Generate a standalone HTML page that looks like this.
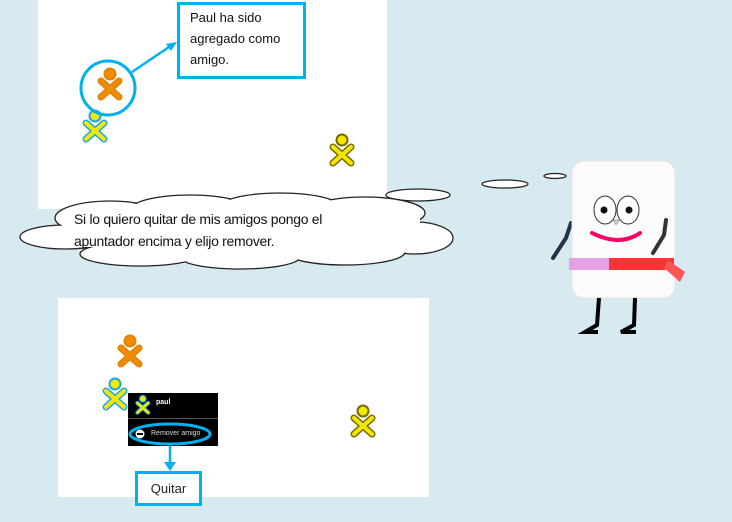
<!DOCTYPE html><html><head><style>
body{margin:0;width:732px;height:522px;background:#d6eaf0;position:relative;overflow:hidden;font-family:"Liberation Sans",sans-serif}
.p{position:absolute;background:#fff}
.t{position:absolute;font-size:13px;color:#111;line-height:21px}
</style></head><body>
<div class="p" style="left:38px;top:0;width:349px;height:209px"></div>
<div class="p" style="left:58px;top:298px;width:371px;height:199px"></div>
<svg width="732" height="522" style="position:absolute;left:0;top:0">
<defs>
<g id="xo"><path d="M3 13L21 29M21 13L3 29" stroke-linecap="round" stroke-width="7" stroke="var(--o)" fill="none"/><circle cx="12" cy="6" r="5.5" fill="var(--i)" stroke="var(--o)" stroke-width="2"/><path d="M3 13L21 29M21 13L3 29" stroke-linecap="round" stroke-width="4" stroke="var(--i)" fill="none"/></g>
</defs>
<use href="#xo" x="98" y="68" style="--o:#e0820a;--i:#f08c00"/>
<use href="#xo" x="83" y="110" style="--o:#1aa8e8;--i:#f5e800"/>
<circle cx="108" cy="88" r="27" fill="none" stroke="#00b0f0" stroke-width="3"/>
<line x1="132" y1="72" x2="172" y2="45" stroke="#00b0f0" stroke-width="2.5"/>
<path d="M177 42L166 44L171 51Z" fill="#00b0f0"/>
<use href="#xo" x="330" y="134" style="--o:#7a6a00;--i:#f2e600"/>
<g stroke="#222" stroke-width="1.3" fill="#fff">
<ellipse cx="418" cy="195" rx="32" ry="6"/><ellipse cx="505" cy="184" rx="23" ry="4"/><ellipse cx="555" cy="176" rx="11" ry="2.5"/>
<ellipse cx="110" cy="218" rx="55" ry="17"/><ellipse cx="190" cy="210" rx="60" ry="15"/><ellipse cx="280" cy="207" rx="60" ry="14"/><ellipse cx="365" cy="213" rx="60" ry="16"/><ellipse cx="415" cy="238" rx="38" ry="16"/><ellipse cx="345" cy="252" rx="60" ry="13"/><ellipse cx="240" cy="257" rx="60" ry="12"/><ellipse cx="140" cy="254" rx="60" ry="12"/><ellipse cx="65" cy="237" rx="45" ry="12"/>
</g>
<g fill="#fff"><ellipse cx="110" cy="218" rx="54" ry="16"/><ellipse cx="190" cy="210" rx="59" ry="14"/><ellipse cx="280" cy="207" rx="59" ry="13"/><ellipse cx="365" cy="213" rx="59" ry="15"/><ellipse cx="415" cy="238" rx="37" ry="15"/><ellipse cx="345" cy="252" rx="59" ry="12"/><ellipse cx="240" cy="257" rx="59" ry="11"/><ellipse cx="140" cy="254" rx="59" ry="11"/><ellipse cx="65" cy="237" rx="44" ry="11"/><rect x="100" y="212" width="320" height="40"/><rect x="75" y="212" width="30" height="35"/></g>
<use href="#xo" x="118" y="335" style="--o:#e0820a;--i:#f08c00"/>
<use href="#xo" x="103" y="378" style="--o:#1aa8e8;--i:#f5e800"/>
<use href="#xo" x="351" y="405" style="--o:#7a6a00;--i:#f2e600"/>
<rect x="128" y="393" width="90" height="53" fill="#000"/>
<line x1="128" y1="418.5" x2="218" y2="418.5" stroke="#555"/>
<use href="#xo" x="136" y="397" transform="translate(54 157) scale(0.6)" style="--o:#1aa8e8;--i:#f5e800"/>
<circle cx="140" cy="434" r="4.5" fill="#fff"/><rect x="137" y="433" width="6" height="2" fill="#000"/>
<ellipse cx="170" cy="434" rx="40" ry="10" fill="none" stroke="#00b0f0" stroke-width="3"/>
<line x1="170" y1="446" x2="170" y2="464" stroke="#00b0f0" stroke-width="2.5"/>
<path d="M164 462L176 462L170 471Z" fill="#00b0f0"/>
<path d="M571 223L566 238L553 258" stroke="#234" stroke-width="4" fill="none" stroke-linecap="round"/>
<rect x="572" y="161" width="103" height="137" rx="12" fill="#fbfbfb" stroke="#e5e5e5"/>
<rect x="569" y="258" width="105" height="12" fill="#f33"/>
<rect x="569" y="258" width="40" height="12" fill="#e6a0e6"/>
<path d="M668 260L685 272L680 282L664 268Z" fill="#f55"/>
<path d="M666 220L664 235L653 253" stroke="#333" stroke-width="4" fill="none" stroke-linecap="round"/>
<ellipse cx="605" cy="210" rx="11" ry="14" fill="#fff" stroke="#333"/><ellipse cx="628" cy="210" rx="11" ry="14" fill="#fff" stroke="#333"/>
<circle cx="604" cy="210" r="3.5" fill="#111"/><circle cx="629" cy="210" r="3.5" fill="#111"/>
<path d="M613 220L620 220L616 225Z" fill="#ccc" stroke="#777" stroke-width=".5"/>
<path d="M592 233Q620 247 640 233" stroke="#f06" stroke-width="4" fill="none" stroke-linecap="round"/>
<path d="M599 298L597 325L585 332L598 332" stroke="#000" stroke-width="4" fill="none"/>
<path d="M635 298L634 325L621 332L636 332" stroke="#000" stroke-width="4" fill="none"/>
</svg>
<div style="position:absolute;left:177px;top:2px;width:123px;height:71px;border:3px solid #00b0f0;background:#fff"></div>
<div class="t" style="left:190px;top:7px">Paul ha sido<br>agregado como<br>amigo.</div>
<div class="t" style="left:74px;top:208px;font-size:14px;letter-spacing:-0.3px;line-height:22px">Si lo quiero quitar de mis amigos pongo el<br>apuntador encima y elijo remover.</div>
<div style="position:absolute;left:156px;top:399px;color:#fff;font-size:7px;font-weight:bold">paul</div>
<div style="position:absolute;left:151px;top:430px;color:#ddd;font-size:7px">Remover amigo</div>
<div style="position:absolute;left:135px;top:471px;width:61px;height:29px;border:3px solid #00b0f0;background:#fff;font-size:13px;line-height:29px;text-align:center;color:#222">Quitar</div>
</body></html>
